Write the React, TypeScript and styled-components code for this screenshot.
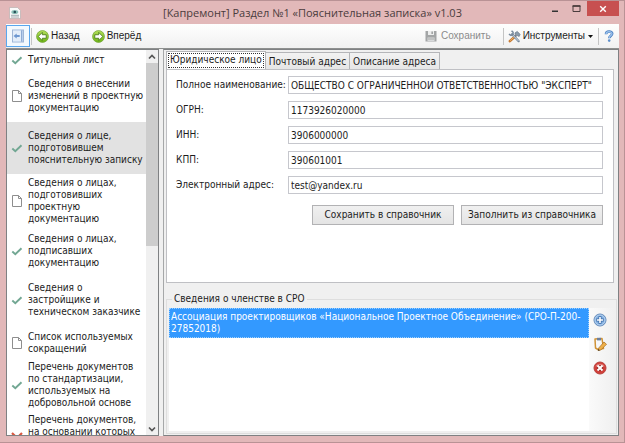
import React, { useState } from "react";
import styled, { createGlobalStyle, css } from "styled-components";

const GlobalStyle = createGlobalStyle`
  *, *::before, *::after { box-sizing: border-box; }
  body {
    margin: 0;
    font: 10px/12px "DejaVu Sans Condensed", "DejaVu Sans", sans-serif;
    color: #1c1c1c;
  }
  button, input { font: inherit; color: inherit; margin: 0; }
`;

const Window = styled.div`
  display: flex;
  flex-direction: column;
  height: 100vh;
  padding: 0 5px 6px 6px;
  background: #e2b8b9;
  border: solid #b99295;
  border-width: 1px 1px 1px 0;
`;

const TitleBar = styled.header`
  flex: none;
  display: grid;
  grid-template-columns: 74px 1fr 74px;
  align-items: center;
  height: 23px;
`;

const AppIcon = styled.svg`
  width: 12px;
  height: 12px;
  margin-left: 3px;
`;

const Title = styled.h1`
  margin: 0;
  text-align: center;
  white-space: nowrap;
  font: 400 11px/16px "Open Sans", "Noto Sans", sans-serif;
  color: #4a3c3d;
`;

const WindowControls = styled.div`
  display: flex;
  justify-content: flex-end;
  align-self: start;
`;

const WindowButton = styled.button<{ $close?: boolean }>`
  display: flex;
  align-items: center;
  justify-content: center;
  width: ${(p) => (p.$close ? 34 : 22)}px;
  height: 15px;
  padding: 0;
  border: 0;
  background: ${(p) => (p.$close ? "#c75050" : "transparent")};
`;

const Toolbar = styled.div`
  flex: none;
  display: flex;
  align-items: center;
  height: 25px;
  padding-right: 1px;
  background: linear-gradient(#fefefe, #f1f1f1);
  border-bottom: 1px solid #8e908f;
  font: 10px/12px "Liberation Sans", Arial, sans-serif;
`;

const ToolButton = styled.button<{ $pressed?: boolean }>`
  display: flex;
  align-items: center;
  gap: 2px;
  height: 22px;
  padding: 0 ${(p) => (p.$pressed ? 4 : 2)}px;
  border: 1px solid ${(p) => (p.$pressed ? "#5aa7ee" : "transparent")};
  background: ${(p) => (p.$pressed ? "#f3f9fe" : "transparent")};
  white-space: nowrap;
  &:disabled { color: #8b8b8b; gap: 4px; margin-right: 8px; }
`;

const NavButtons = styled.div`
  display: flex;
  gap: 6px;
`;

const Separator = styled.span`
  width: 1px;
  height: 17px;
  margin: 0 1px;
  background: #c4c4c4;
`;

const Spacer = styled.span`flex: 1;`;

const Body = styled.div`
  flex: 1;
  min-height: 0;
  display: flex;
  gap: 4px;
  background: #f0f0f0;
`;

const Sidebar = styled.nav`
  flex: none;
  display: flex;
  width: 153px;
  background: #fff;
  border: 1px solid #7f8183;
`;

const Sections = styled.ul`
  flex: 1;
  min-width: 0;
  margin: 0;
  padding: 0;
  overflow: hidden;
  list-style: none;
`;

const Section = styled.li<{ $pad: number; $selected?: boolean }>`
  display: flex;
  align-items: center;
  gap: 5px;
  padding: ${(p) => p.$pad}px 0 ${(p) => p.$pad}px 4px;
  background: ${(p) => (p.$selected ? "#e2e2e2" : "#fff")};
`;

const SectionLink = styled.a<{ $tall?: boolean }>`
  color: inherit;
  text-decoration: none;
  white-space: pre;
  ${(p) => p.$tall && css`min-height: 48px;`}
`;

const ScrollBar = styled.div`
  flex: none;
  display: flex;
  flex-direction: column;
  width: 12px;
  background: #f0f0f0;
`;

const ScrollButton = styled.button`
  display: flex;
  align-items: center;
  justify-content: center;
  height: 13px;
  padding: 0;
  border: 0;
  background: transparent;
`;

const ScrollTrack = styled.div`flex: 1;`;
const ScrollThumb = styled.div`
  height: 51%;
  background: #cdcdcd;
`;

const Content = styled.main`
  flex: 1;
  min-width: 0;
  display: flex;
  flex-direction: column;
  padding: 1px 1px 1px 2px;
  border: 1px solid #7f8183;
  border-left-color: #a6a8a9;
`;

const Tabs = styled.div`
  flex: none;
  display: flex;
  align-items: flex-end;
`;

const Tab = styled.button<{ $active?: boolean }>`
  height: ${(p) => (p.$active ? 19 : 17)}px;
  padding: ${(p) => (p.$active ? "1px 1px 2px" : "1px 3px 0")};
  border: 1px solid #b4b5b8;
  border-left-width: ${(p) => (p.$active ? 1 : 0)}px;
  border-bottom: 0;
  background: ${(p) => (p.$active ? "#fff" : "linear-gradient(#f2f2f2, #e6e6e6)")};
  margin-bottom: ${(p) => (p.$active ? -1 : 0)}px;
  white-space: nowrap;
`;

const FocusRing = styled.span`
  display: block;
  padding: 0 1px 1px;
  border: 1px dotted #333;
`;

const Pane = styled.section`
  flex: none;
  display: flex;
  flex-direction: column;
  gap: 7px;
  height: 214px;
  padding: 6px 10px 0 9px;
  margin-right: 3px;
  background: #fff;
  border: 1px solid #bfc0c4;
`;

const Field = styled.label`
  display: grid;
  grid-template-columns: 112px 1fr;
  align-items: center;
  height: 18px;
  white-space: nowrap;
`;

const TextInput = styled.input`
  width: 100%;
  min-width: 0;
  height: 18px;
  padding: 0 2px;
  line-height: 16px;
  border: 1px solid #c6c7cd;
  background: #fff;
  outline: 0;
`;

const Actions = styled.div`
  display: flex;
  justify-content: flex-end;
  gap: 7px;
  padding-top: 4px;
`;

const ActionButton = styled.button`
  width: 142px;
  height: 20px;
  padding: 0;
  border: 1px solid #b2b2b4;
  background: linear-gradient(#f0f0f0, #e4e4e4);
  white-space: nowrap;
`;

const Group = styled.fieldset`
  flex: 1;
  min-width: 0;
  min-height: 0;
  display: flex;
  margin: 10px 0 0;
  padding: 3px 1px 2px 2px;
  border: 1px solid #dedede;
`;

const Legend = styled.legend`
  margin-left: 3px;
  padding: 0 2px;
`;

const Members = styled.ul`
  flex: 1;
  min-width: 0;
  margin: 0;
  padding: 0;
  list-style: none;
  background: #fff;
`;

const Member = styled.li`
  padding: 2px 0 2px 1px;
  background: #3399ff;
  border: 1px dotted #9dd0ff;
  color: #fff;
`;

const SideTools = styled.div`
  flex: none;
  display: flex;
  flex-direction: column;
  align-items: center;
  gap: 8px;
  width: 26px;
  padding: 4px 4px 0 0;
  background: linear-gradient(90deg, #fafafa, #f0f0f0);
`;

const IconButton = styled.button`
  display: flex;
  width: 16px;
  height: 16px;
  padding: 1px;
  border: 0;
  background: transparent;
`;

const Glyph = styled.svg<{ $size?: number }>`
  flex: none;
  display: block;
  width: ${(p) => p.$size ?? 14}px;
  height: ${(p) => p.$size ?? 14}px;
`;

const CheckIcon = () => (
  <Glyph $size={12} viewBox="0 0 12 12" fill="none">
    <path d="M1.300 6.500L4.300 9.200 10.500 3.200" stroke="#72a793" strokeWidth="1.900" />
  </Glyph>
);

const PageIcon = () => (
  <Glyph $size={12} viewBox="0 0 12 12">
    <path d="M1.500.5h6l3 3v8h-9z" fill="#fff" stroke="#8e8e8e" />
    <path d="M7.500.5v3h3" fill="none" stroke="#8e8e8e" />
  </Glyph>
);

const CrossIcon = () => (
  <Glyph $size={12} viewBox="0 0 12 12" fill="none">
    <path d="M1 1l10 10M11 1L1 11" stroke="#d95740" strokeWidth="2.200" />
  </Glyph>
);

const ArrowBall = ({ flip }: { flip?: boolean }) => (
  <Glyph $size={13} viewBox="0 0 14 14">
    <defs>
      <linearGradient id="ball" x1="0" y1="0" x2="0" y2="1">
        <stop offset="0" stopColor="#b4e05a" />
        <stop offset="1" stopColor="#6cb314" />
      </linearGradient>
    </defs>
    <circle cx="7" cy="7" r="6.400" fill="url(#ball)" stroke="#74a53a" strokeWidth=".8" />
    <g transform={flip ? "translate(14 0) scale(-1 1)" : undefined}>
      <path d="M2.400 7l4.400-4.400v2.500h4.200v3.800H6.800v2.500z" fill="#fff" stroke="#47761a" strokeWidth=".9" />
    </g>
  </Glyph>
);

const PanelIcon = () => (
  <Glyph $size={14} viewBox="0 0 14 14">
    <rect x="1.500" y="1" width="11" height="12" fill="#b9cfec" stroke="#9fb6d6" />
    <path d="M2 1.500h8v11H2z" fill="#e3edf9" />
    <path d="M10.500 1.500v11" stroke="#8fabd3" />
    <path d="M2.500 7l3.200-2.600v1.600h3v2h-3v1.600z" fill="#6d97d0" />
  </Glyph>
);

const SaveIcon = () => (
  <Glyph $size={12} viewBox="0 0 12 12">
    <path d="M.5 1h11v10.500H.5z" fill="#a3a5a6" />
    <path d="M3 1h6v4H3z" fill="#eceded" />
    <path d="M6.500 1.500h1.300v2.500H6.500z" fill="#8f9192" />
    <path d="M2.500 7.500h7v3.500h-7z" fill="#d8dadb" />
    <path d="M3 9h6" stroke="#aaa" />
  </Glyph>
);

const ToolsIcon = () => (
  <Glyph $size={13} viewBox="0 0 14 14" fill="none">
    <path d="M2 12l5.500-5" stroke="#c77b33" strokeWidth="2.800" strokeLinecap="round" />
    <path d="M2.200 11.600l5-4.600" stroke="#f0b168" strokeWidth="1" />
    <path d="M4.500 4.500l7 7.500" stroke="#77899c" strokeWidth="2.400" strokeLinecap="round" />
    <path d="M4.800 5l6.500 6.800" stroke="#d6e0ea" strokeWidth="1" />
    <path d="M1 4.500L3.200 5.800 5.300 4.800 5.500 2.500 3.800.8" stroke="#77899c" strokeWidth="1.600" />
    <path d="M7.500 3.200L10 1.500l3 3.200-1 2.300-2-1-1.700.8z" fill="#8b9bab" stroke="#5e7084" strokeWidth=".7" />
  </Glyph>
);

const HelpIcon = () => (
  <Glyph $size={12} viewBox="0 0 12 12" fill="none">
    <path d="M3 4.200C3 .6 9.300.7 9.200 3.800 9.100 6 6.200 5.800 6.200 8.300" stroke="#4d80c0" strokeWidth="2.600" />
    <path d="M3 4C3.200 1 9 1 9 3.800 8.900 5.900 6.200 5.800 6.200 8" stroke="#9cc3ee" strokeWidth="1.300" />
    <circle cx="6.200" cy="10.600" r="1.300" fill="#5d8fcb" />
  </Glyph>
);

const AddIcon = () => (
  <Glyph viewBox="0 0 14 14">
    <circle cx="7" cy="7" r="6" fill="#86b2e2" stroke="#6389b8" />
    <circle cx="7" cy="7" r="5" fill="none" stroke="#b9d4f0" strokeWidth=".9" />
    <path d="M7 3.300v7.400M3.300 7h7.400" stroke="#3d6ca8" strokeWidth="3" />
    <path d="M7 3.900v6.200M3.900 7h6.200" stroke="#fff" strokeWidth="1.600" />
  </Glyph>
);

const EditIcon = () => (
  <Glyph viewBox="0 0 14 14">
    <path d="M2 2l7-.5 1.500 10L5 12.500 2.500 11z" fill="#f7f8fa" stroke="#cf9236" strokeWidth="1.500" strokeLinejoin="round" />
    <path d="M4 .8h4v2.600H4z" fill="#6d7f9c" />
    <path d="M11 5l2.500 2.300L7.800 13l-2.600.7.600-2.800z" fill="#efb04a" stroke="#a36a1d" strokeWidth=".7" />
    <path d="M5 13.800l.4-1.800 1.500 1.300z" fill="#333" />
  </Glyph>
);

const DeleteIcon = () => (
  <Glyph viewBox="0 0 14 14">
    <circle cx="7" cy="7" r="6" fill="#d2403a" stroke="#b8413c" />
    <path d="M2.500 5.500a4.700 4 0 0 1 9 0z" fill="#e98680" />
    <path d="M4.700 4.700l4.600 4.600M9.300 4.700L4.700 9.300" stroke="#8d1f1c" strokeWidth="3.400" />
    <path d="M4.500 4.500l5 5M9.500 4.500l-5 5" stroke="#fff" strokeWidth="2" />
  </Glyph>
);

const Chevron = ({ down }: { down?: boolean }) => (
  <Glyph $size={8} viewBox="0 0 8 8" fill="none">
    <path d={down ? "M1 2.500l3 3 3-3" : "M1 5.500l3-3 3 3"} stroke="#555" strokeWidth="1.700" />
  </Glyph>
);

type Status = "done" | "empty" | "error";
const statusIcons = { done: CheckIcon, empty: PageIcon, error: CrossIcon };

const sections: { text: string; status: Status; pad: number; selected?: boolean; tall?: boolean }[] = [
  { text: "Титульный лист", status: "done", pad: 4 },
  { text: "Сведения о внесении\nизменений в проектную\nдокументацию", status: "empty", pad: 8 },
  { text: "Сведения о лице,\nподготовившем\nпояснительную записку", status: "done", pad: 8, selected: true },
  { text: "Сведения о лицах,\nподготовивших\nпроектную\nдокументацию", status: "empty", pad: 3 },
  { text: "Сведения о лицах,\nподписавших\nдокументацию", status: "done", pad: 5 },
  { text: "Сведения о\nзастройщике и\nтехническом заказчике", status: "done", pad: 8 },
  { text: "Список используемых\nсокращений", status: "empty", pad: 5 },
  { text: "Перечень документов\nпо стандартизации,\nиспользуемых на\nдобровольной основе", status: "done", pad: 1 },
  { text: "Перечень документов,\nна основании которых", status: "error", pad: 4, tall: true },
];

const initialFields = [
  { label: "Полное наименование:", value: 'ОБЩЕСТВО С ОГРАНИЧЕННОЙ ОТВЕТСТВЕННОСТЬЮ "ЭКСПЕРТ"' },
  { label: "ОГРН:", value: "1173926020000" },
  { label: "ИНН:", value: "3906000000" },
  { label: "КПП:", value: "390601001" },
  { label: "Электронный адрес:", value: "test@yandex.ru" },
];

export default function App() {
  const [fields, setFields] = useState(initialFields);
  const update = (index: number, value: string) =>
    setFields(fields.map((f, i) => (i === index ? { ...f, value } : f)));

  return (
    <Window>
      <GlobalStyle />
      <TitleBar>
        <AppIcon viewBox="0 0 12 12">
          <path d="M.5.5h8l3 3v8H.5z" fill="#fafafa" stroke="#b9b0b0" strokeWidth=".7" />
          <ellipse cx="5.800" cy="5" rx="3.500" ry="2" fill="#8fc3ba" />
          <circle cx="5.800" cy="5" r="1.300" fill="#274f58" />
          <path d="M2 8.300h8M2 10h8" stroke="#8c9aa0" strokeWidth=".8" />
        </AppIcon>
        <Title>[Капремонт] Раздел №1 «Пояснительная записка» v1.03</Title>
        <WindowControls>
          <WindowButton aria-label="Свернуть">
            <Glyph $size={8} viewBox="0 0 8 8"><path d="M1 5.500h6v1.500H1z" fill="#333" /></Glyph>
          </WindowButton>
          <WindowButton aria-label="Развернуть">
            <Glyph $size={9} viewBox="0 0 9 9"><path d="M1 2h7v5.500H1z" fill="none" stroke="#4a3c3d" /><path d="M.5 2h8" stroke="#4a3c3d" strokeWidth="1.600" /></Glyph>
          </WindowButton>
          <WindowButton $close aria-label="Закрыть">
            <Glyph $size={8} viewBox="0 0 8 8"><path d="M1.200 1.200l5.600 5.600M6.800 1.200L1.200 6.800" stroke="#fff" strokeWidth="1.400" /></Glyph>
          </WindowButton>
        </WindowControls>
      </TitleBar>

      <Toolbar role="toolbar">
        <ToolButton $pressed aria-label="Панель разделов"><PanelIcon /></ToolButton>
        <Separator />
        <NavButtons>
          <ToolButton><ArrowBall />Назад</ToolButton>
          <ToolButton><ArrowBall flip />Вперёд</ToolButton>
        </NavButtons>
        <Spacer />
        <ToolButton disabled><SaveIcon />Сохранить</ToolButton>
        <Separator />
        <ToolButton>
          <ToolsIcon />Инструменты
          <Glyph $size={7} viewBox="1 1 7 7"><path d="M2 3h5L4.500 6z" fill="#111" /></Glyph>
        </ToolButton>
        <Separator />
        <ToolButton aria-label="Справка"><HelpIcon /></ToolButton>
      </Toolbar>

      <Body>
        <Sidebar>
          <Sections>
            {sections.map((s) => {
              const Icon = statusIcons[s.status];
              return (
                <Section key={s.text} $pad={s.pad} $selected={s.selected}>
                  <Icon />
                  <SectionLink href="#" $tall={s.tall}>{s.text}</SectionLink>
                </Section>
              );
            })}
          </Sections>
          <ScrollBar>
            <ScrollButton aria-label="Вверх"><Chevron /></ScrollButton>
            <ScrollTrack><ScrollThumb /></ScrollTrack>
            <ScrollButton aria-label="Вниз"><Chevron down /></ScrollButton>
          </ScrollBar>
        </Sidebar>

        <Content>
          <Tabs role="tablist">
            <Tab role="tab" aria-selected="true" $active><FocusRing>Юридическое лицо</FocusRing></Tab>
            <Tab role="tab" aria-selected="false">Почтовый адрес</Tab>
            <Tab role="tab" aria-selected="false">Описание адреса</Tab>
          </Tabs>
          <Pane role="tabpanel">
            {fields.map((f, i) => (
              <Field key={f.label}>
                {f.label}
                <TextInput type="text" value={f.value} onChange={(e) => update(i, e.target.value)} />
              </Field>
            ))}
            <Actions>
              <ActionButton>Сохранить в справочник</ActionButton>
              <ActionButton>Заполнить из справочника</ActionButton>
            </Actions>
          </Pane>
          <Group>
            <Legend>Сведения о членстве в СРО</Legend>
            <Members>
              <Member>Ассоциация проектировщиков «Национальное Проектное Объединение» (СРО-П-200-27852018)</Member>
            </Members>
            <SideTools>
              <IconButton aria-label="Добавить"><AddIcon /></IconButton>
              <IconButton aria-label="Изменить"><EditIcon /></IconButton>
              <IconButton aria-label="Удалить"><DeleteIcon /></IconButton>
            </SideTools>
          </Group>
        </Content>
      </Body>
    </Window>
  );
}
